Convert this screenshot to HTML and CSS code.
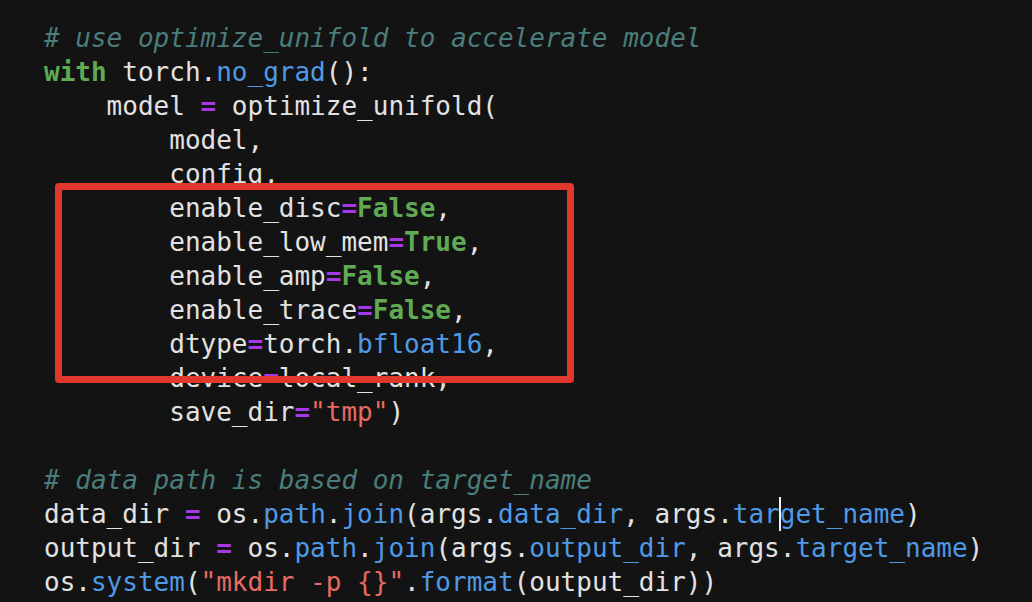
FILE: index.html
```html
<!DOCTYPE html>
<html>
<head>
<meta charset="utf-8">
<link rel="stylesheet" href="styles.css">
</head>
<body>
<div class="editor">
<pre class="code"><span class="cm"># use optimize_unifold to accelerate model</span>
<span class="kw">with</span> torch.<span class="fn">no_grad</span>():
    model <span class="op">=</span> optimize_unifold(
        model,
        config,
        enable_disc<span class="op">=</span><span class="kw">False</span>,
        enable_low_mem<span class="op">=</span><span class="kw">True</span>,
        enable_amp<span class="op">=</span><span class="kw">False</span>,
        enable_trace<span class="op">=</span><span class="kw">False</span>,
        dtype<span class="op">=</span>torch.<span class="fn">bfloat16</span>,
        device<span class="op">=</span>local_rank,
        save_dir<span class="op">=</span><span class="str">"tmp"</span>)

<span class="cm"># data path is based on target_name</span>
data_dir <span class="op">=</span> os.<span class="fn">path</span>.<span class="fn">join</span>(args.<span class="fn">data_dir</span>, args.<span class="fn">tar<span class="caret"></span>get_name</span>)
output_dir <span class="op">=</span> os.<span class="fn">path</span>.<span class="fn">join</span>(args.<span class="fn">output_dir</span>, args.<span class="fn">target_name</span>)
os.<span class="fn">system</span>(<span class="str">"mkdir -p {}"</span>.<span class="fn">format</span>(output_dir))</pre>
<div class="highlight"></div>
</div>
</body>
</html>
```

FILE: styles.css
```css
html, body {
  margin: 0;
  padding: 0;
  background: #131313;
}
.editor {
  position: relative;
  width: 1032px;
  height: 602px;
  overflow: hidden;
  background: #131313;
}
.code {
  margin: 0;
  padding: 21px 0 0 44px;
  font-family: "DejaVu Sans Mono", monospace;
  font-size: 26px;
  line-height: 34px;
  color: #e2e2e2;
  white-space: pre;
}
.cm {
  color: #4a7d7b;
  font-style: italic;
}
.kw {
  color: #5faa53;
  font-weight: bold;
}
.fn {
  color: #4f9ae6;
}
.op {
  color: #a638ea;
  font-weight: bold;
}
.str {
  color: #e86a62;
}
.caret {
  display: inline-block;
  width: 0;
  height: 34px;
  vertical-align: top;
  border-left: 2px solid #f2f2f2;
  margin-left: -1px;
  margin-right: -1px;
}
.highlight {
  position: absolute;
  left: 55px;
  top: 183px;
  width: 505px;
  height: 186px;
  border: 7px solid #e1382e;
  border-radius: 4px;
}
```
